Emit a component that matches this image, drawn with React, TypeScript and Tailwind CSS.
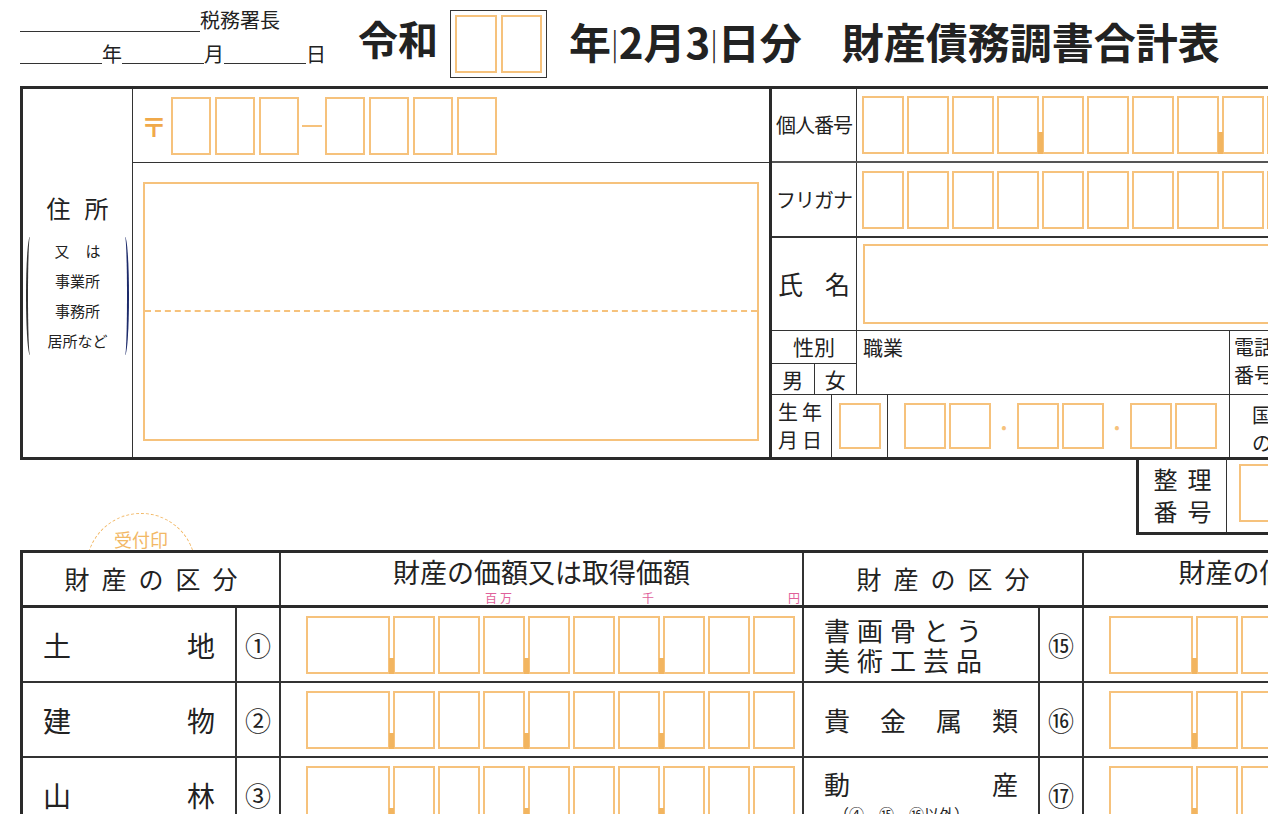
const O = "border-2 border-[#f6c27c]";
const font = { fontFamily: '"Noto Sans CJK JP", "Noto Sans", sans-serif' };

function Boxes({ n, w = 42, h = 56, gap = 3, ticks = [] as number[] }) {
  return (
    <div className="flex shrink-0" style={{ gap }}>
      {Array.from({ length: n }).map((_, i) => (
        <div key={i} className="relative shrink-0">
          <div className={O} style={{ width: w, height: h }} />
          {ticks.includes(i) && <div className="absolute left-[-4px] bottom-0 w-[5px] h-[22px] bg-[#f2b560]" />}
        </div>
      ))}
    </div>
  );
}

function AmountBoxes() {
  return (
    <div className="flex gap-[3px] shrink-0">
      <div className={O + " w-[84px] h-[58px] shrink-0"} />
      {Array.from({ length: 9 }).map((_, i) => (
        <div key={i} className="relative shrink-0">
          <div className={O + " w-[42px] h-[58px]"} />
          {(i === 0 || i === 3 || i === 6) && <div className="absolute left-[-4px] bottom-0 w-[5px] h-[16px] bg-[#f2b560]" />}
        </div>
      ))}
    </div>
  );
}

function Row({ a, b, num, right, rnum }: { a: string; b: string; num: string; right: React.ReactNode; rnum: string }) {
  return (
    <div className="flex h-[75px] border-b-2 border-[#333]">
      <div className="w-[212px] shrink-0 flex items-center justify-between px-5 text-[28px]">
        <span>{a}</span><span>{b}</span>
      </div>
      <div className="w-[44px] shrink-0 border-l-2 border-[#333] flex items-center justify-center text-[26px]">{num}</div>
      <div className="w-[525px] shrink-0 border-l-2 border-r-2 border-[#333] flex items-center pl-[25px]"><AmountBoxes /></div>
      <div className="w-[234px] shrink-0 flex flex-col justify-center px-5">{right}</div>
      <div className="w-[44px] shrink-0 border-l-2 border-[#333] flex items-center justify-center text-[26px]">{rnum}</div>
      <div className="flex-1 border-l-2 border-[#333] flex items-center pl-[25px]"><AmountBoxes /></div>
    </div>
  );
}

export default function App() {
  return (
    <div className="w-[1268px] h-[814px] overflow-hidden bg-white text-[#222]" style={font}>
      <div className="w-[1500px] relative">
        {/* header */}
        <div className="flex items-start h-[86px]">
          <div className="ml-[20px] mt-[4px] w-[310px] shrink-0 text-[20px] leading-none">
            <div className="flex items-end"><div className="w-[180px] border-b border-[#333] h-[28px]" /><span className="pb-[2px]">税務署長</span></div>
            <div className="flex items-end mt-[10px]"><div className="w-[82px] border-b border-[#333] h-[22px]" /><span>年</span><div className="w-[82px] border-b border-[#333] h-[22px]" /><span>月</span><div className="w-[82px] border-b border-[#333] h-[22px]" /><span>日</span></div>
          </div>
          <div className="ml-[28px] mt-[18px] text-[40px] font-bold leading-none">令和</div>
          <div className="ml-[12px] mt-[10px] w-[97px] h-[68px] shrink-0 border border-[#333] flex gap-[4px] p-[4px]">
            <div className={O + " flex-1"} /><div className={O + " flex-1"} />
          </div>
          <div className="ml-[22px] mt-[20px] text-[42px] font-bold leading-none whitespace-nowrap">年<span className="font-light text-[30px] align-[4px]">|</span>2月3<span className="font-light text-[30px] align-[4px]">|</span>日分<span className="ml-[40px]">財産債務調書合計表</span></div>
        </div>

        {/* top table */}
        <div className="ml-[20px] flex h-[374px] border-[3px] border-[#2a2a2a] border-r-0">
          <div className="w-[110px] shrink-0 border-r border-[#333] flex flex-col items-center justify-center">
            <div className="text-[24px] tracking-[14px] pl-[14px]">住所</div>
            <div className="mt-[10px] flex items-center gap-[4px]">
              <div className="w-[8px] h-[118px] border-l-2 border-[#333] rounded-l-[50%]" />
              <div className="text-[15px] leading-[30px] text-center">
                <div className="tracking-[16px] pl-[16px]">又は</div><div>事業所</div><div>事務所</div><div>居所など</div>
              </div>
              <div className="w-[8px] h-[118px] border-r-2 border-[#1c2a6a] rounded-r-[50%]" />
            </div>
          </div>
          <div className="w-[636px] shrink-0 flex flex-col">
            <div className="h-[74px] border-b border-[#333] flex items-center pl-[8px]">
              <span className="text-[#f0a94a] text-[26px] font-bold mr-[4px]">〒</span>
              <Boxes n={3} w={40} h={58} gap={4} />
              <div className="w-[20px] mx-[3px] border-t-2 border-[#f6c27c]" />
              <Boxes n={4} w={40} h={58} gap={4} />
            </div>
            <div className="flex-1 px-[10px] pt-[19px] pb-[16px]">
              <div className={O + " h-full flex flex-col"}>
                <div className="h-[128px] border-b-2 border-dashed border-[#f6c27c]" />
              </div>
            </div>
          </div>
          <div className="flex-1 border-l-[3px] border-[#2a2a2a] flex flex-col">
            <div className="h-[74px] flex border-b-2 border-[#555]">
              <div className="w-[85px] shrink-0 border-r border-[#333] flex items-center justify-center text-[20px] tracking-[-1px]">個人番号</div>
              <div className="flex items-center pl-[5px]"><Boxes n={12} w={42} h={58} gap={3} ticks={[4, 8]} /></div>
            </div>
            <div className="h-[75px] flex border-b-2 border-[#333]">
              <div className="w-[85px] shrink-0 border-r border-[#333] flex items-center justify-center text-[20px] tracking-[-1px]">フリガナ</div>
              <div className="flex items-center pl-[5px]"><Boxes n={12} w={42} h={58} gap={3} /></div>
            </div>
            <div className="h-[93px] flex border-b border-[#333]">
              <div className="w-[85px] shrink-0 border-r border-[#333] flex items-center justify-between px-[6px] text-[25px]"><span>氏</span><span>名</span></div>
              <div className="flex-1 p-[6px]"><div className={O + " h-full"} /></div>
            </div>
            <div className="h-[64px] flex border-b border-[#333]">
              <div className="w-[85px] shrink-0 border-r border-[#333] flex flex-col text-[21px]">
                <div className="flex-1 border-b border-[#333] flex items-center justify-center">性別</div>
                <div className="flex-1 flex"><div className="flex-1 border-r border-[#333] flex items-center justify-center">男</div><div className="flex-1 flex items-center justify-center">女</div></div>
              </div>
              <div className="w-[373px] shrink-0 border-r border-[#333] text-[20px] pl-[6px] pt-[2px]">職業</div>
              <div className="text-[20px] leading-[28px] pl-[4px] pt-[2px] whitespace-nowrap"><div>電話</div><div>番号</div></div>
            </div>
            <div className="flex-1 flex">
              <div className="w-[60px] shrink-0 border-r border-[#333] flex flex-col justify-center pl-[6px] text-[20px] leading-[28px] tracking-[4px]"><div>生年</div><div>月日</div></div>
              <div className="w-[56px] shrink-0 border-r border-[#333] flex items-center justify-center"><div className={O + " w-[42px] h-[46px]"} /></div>
              <div className="w-[342px] shrink-0 border-r border-[#333] flex items-center pl-[16px]">
                <Boxes n={2} w={42} h={46} gap={3} /><span className="w-[26px] text-center text-[#f6c27c]">•</span>
                <Boxes n={2} w={42} h={46} gap={3} /><span className="w-[26px] text-center text-[#f6c27c]">•</span>
                <Boxes n={2} w={42} h={46} gap={3} />
              </div>
              <div className="text-[20px] leading-[28px] pl-[22px] pt-[6px] whitespace-nowrap"><div>国</div><div>の</div></div>
            </div>
          </div>
        </div>

        {/* 整理番号 */}
        <div className="flex ml-[1136px] h-[77px] -mt-[2px] border-[3px] border-t-0 border-r-0 border-[#2a2a2a]">
          <div className="w-[88px] shrink-0 border-r border-[#333] flex flex-col items-center justify-center text-[24px] leading-[32px] tracking-[10px] pl-[10px]"><div>整理</div><div>番号</div></div>
          <div className="pl-[12px] pt-[6px]"><div className={O + " w-[50px] h-[58px]"} /></div>
        </div>

        {/* 受付印 */}
        <div className="absolute left-[86px] top-[513px] w-[110px] h-[110px] rounded-full border border-dashed border-[#f2b866] flex justify-center pt-[12px] text-[18px] text-[#f2b866]">受付印</div>

        {/* bottom table */}
        <div className="relative ml-[20px] mt-[15px] bg-white border-[3px] border-b-0 border-r-0 border-[#2a2a2a]">
          <div className="flex h-[55px] border-b-[3px] border-[#2a2a2a]">
            <div className="w-[256px] shrink-0 flex items-center justify-center text-[25px] tracking-[12px] pl-[12px]">財産の区分</div>
            <div className="w-[525px] shrink-0 border-l-2 border-r-2 border-[#333] relative flex justify-center pt-[2px] text-[27px] leading-[34px]">
              財産の価額又は取得価額
              <span className="absolute left-[204px] bottom-[1px] text-[12px] leading-none text-[#e0609a] tracking-[3px]">百万</span>
              <span className="absolute left-[361px] bottom-[1px] text-[12px] leading-none text-[#e0609a]">千</span>
              <span className="absolute right-[2px] bottom-[1px] text-[12px] leading-none text-[#e0609a]">円</span>
            </div>
            <div className="w-[278px] shrink-0 flex items-center justify-center text-[25px] tracking-[12px] pl-[12px]">財産の区分</div>
            <div className="flex-1 border-l-2 border-[#333] flex justify-center pl-[70px] text-[27px] leading-[34px] pt-[2px] whitespace-nowrap">財産の価額又は取得価額</div>
          </div>
          <Row a="土" b="地" num="①" rnum="⑮" right={<div className="text-[26px] leading-[30px] tracking-[7px] whitespace-nowrap"><div>書画骨とう</div><div>美術工芸品</div></div>} />
          <Row a="建" b="物" num="②" rnum="⑯" right={<div className="text-[26px] flex justify-between"><span>貴</span><span>金</span><span>属</span><span>類</span></div>} />
          <Row a="山" b="林" num="③" rnum="⑰" right={<div><div className="text-[26px] flex justify-between"><span>動</span><span>産</span></div><div className="text-[15px] pl-[10px] whitespace-nowrap">（④、⑮、⑯以外）</div></div>} />
        </div>
      </div>
    </div>
  );
}
